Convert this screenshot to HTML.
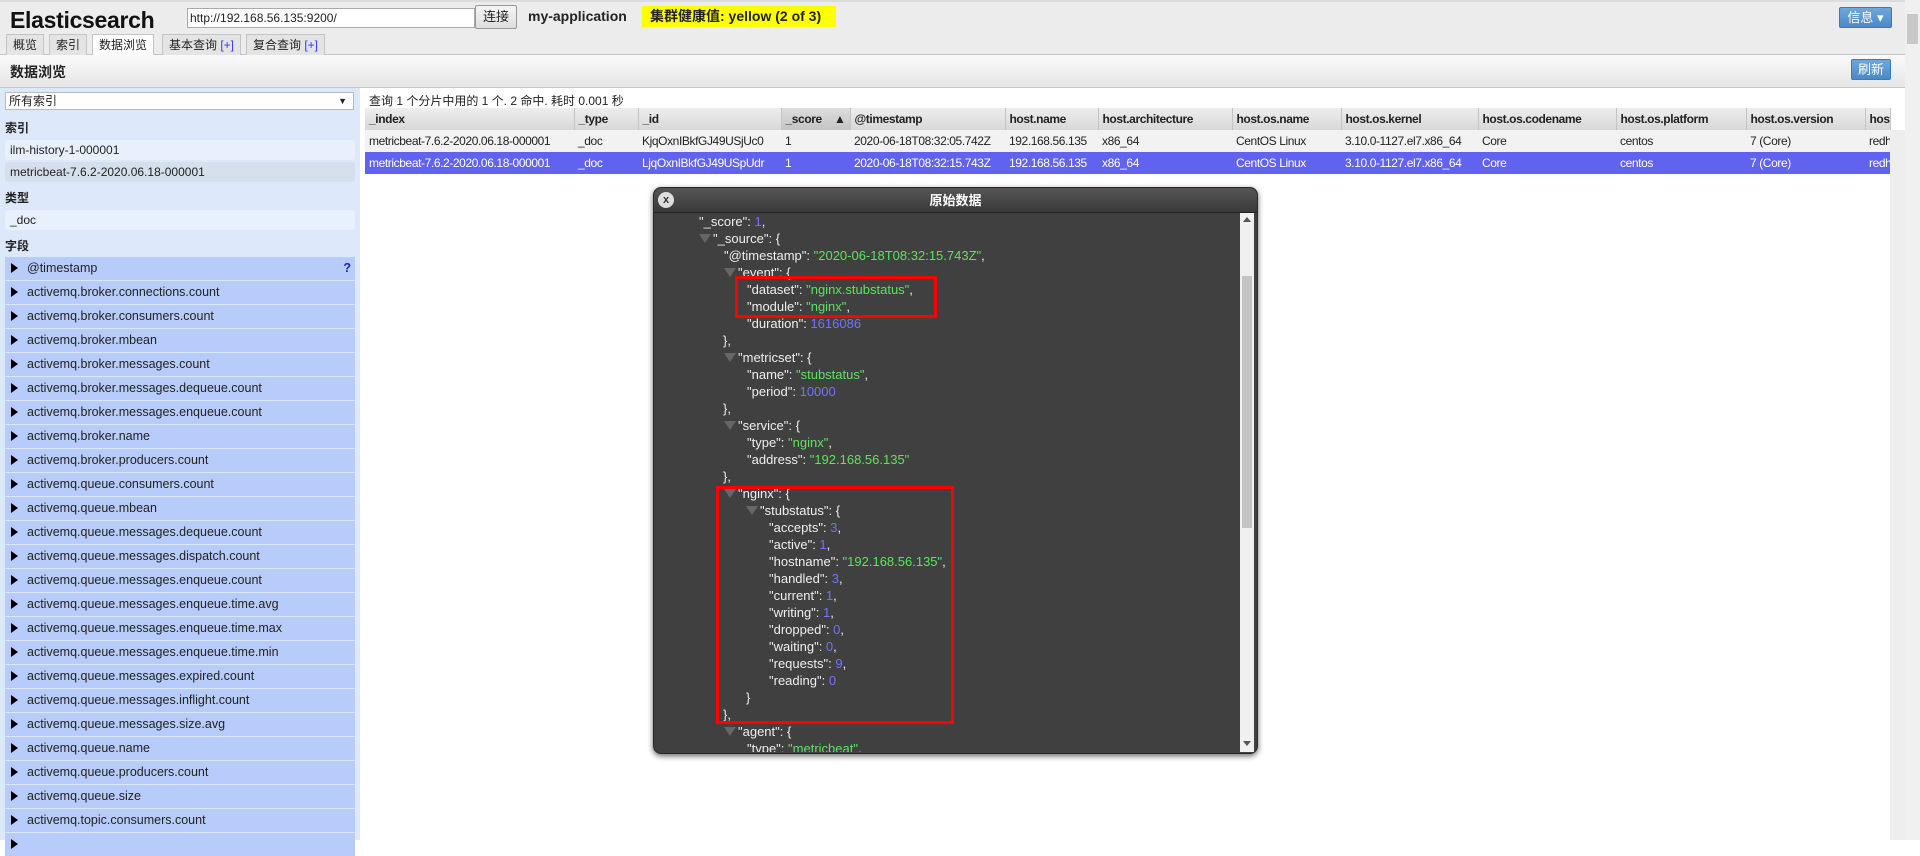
<!DOCTYPE html>
<html><head><meta charset="utf-8"><style>
*{box-sizing:border-box;margin:0;padding:0}
body{width:1920px;height:840px;overflow:hidden;background:#fff;font-family:"Liberation Sans","Noto Sans CJK SC",sans-serif;font-size:12px;color:#222;position:relative}
.abs{position:absolute}
#hdr{left:0;top:0;width:1905px;height:55px;background:#ececec;border-bottom:1px solid #c4c4c4;border-top:2px solid #dcdcdc}
.tab{position:absolute;top:34px;height:21px;border:1px solid #c4c4c4;border-bottom:none;background:#e4e4e4;font-size:12px;line-height:20px;padding:0 6px;color:#222}
.tab.act{background:#fff;height:22px}
.tab span{color:#33f}
#bar{left:0;top:55px;width:1905px;height:33px;background:linear-gradient(#fafafa,#e6e6e6);border-bottom:1px solid #c8c8c8}
.btn{position:absolute;background:linear-gradient(#6ea8dc,#4a88c8);border:1px solid #3d78b8;border-radius:2px;color:#fff;font-size:13px;text-align:center}
#left{left:0;top:88px;width:360px;height:752px;background:#dde8fb}
.lbl{position:absolute;left:5px;font-weight:bold;font-size:12px}
.it{position:absolute;left:5px;width:350px;height:20px;background:#e8f0fd;border-radius:3px;line-height:20px;padding-left:5px;font-size:12px}
.f{position:absolute;left:5px;width:350px;height:23px;background:#b8ccfb;line-height:23px;padding-left:22px;font-size:12.5px;color:#222}
.f:before{content:"";position:absolute;left:6px;top:6px;border-left:7px solid #000;border-top:5px solid transparent;border-bottom:5px solid transparent}
table{position:absolute;left:365px;top:108px;border-collapse:collapse;table-layout:fixed;width:1525px}
td,th{white-space:nowrap;overflow:hidden;padding-left:4px;text-align:left;font-size:12px;letter-spacing:-0.4px}
th{height:22px;background:linear-gradient(#eee,#d8d8d8);border-right:1px solid #c4c4c4;font-weight:bold}
tr.r1 td{height:22px;background:#f2f2f2}
tr.r2 td{height:22px;background:#6262f0;color:#fff}
#dlg{left:653px;top:187px;width:605px;height:567px;background:#404040;border-radius:8px;box-shadow:0 2px 6px rgba(0,0,0,.6);border:1px solid #2a2a2a}
#dt{left:0;top:0;width:603px;height:25px;border-radius:8px 8px 0 0;background:linear-gradient(#555,#3a3a3a);border-bottom:1px solid #222;color:#fff;font-weight:bold;text-align:center;line-height:25px;font-size:13px}
.j{position:absolute;color:#eee;font-size:13px;line-height:17px;white-space:nowrap}
.s{color:#5ee35e}.n{color:#7373ff}
.tri{position:absolute;border-top:9px solid #666;border-left:6px solid transparent;border-right:6px solid transparent}
.rb{position:absolute;border:3px solid #f00}
</style></head><body>
<div id="hdr" class="abs"></div>
<div class="abs" style="left:10px;top:7px;font-size:23px;font-weight:bold;color:#111;letter-spacing:-0.3px">Elasticsearch</div>
<div class="abs" style="left:187px;top:8px;width:288px;height:20px;background:#fff;border:1px solid #aaa;font-size:12px;line-height:18px;padding-left:2px">http://192.168.56.135:9200/</div>
<div class="abs" style="left:475px;top:5px;width:42px;height:24px;background:linear-gradient(#f6f6f6,#ddd);border:1px solid #999;border-radius:2px;text-align:center;line-height:22px;font-size:13px">连接</div>
<div class="abs" style="left:528px;top:8px;font-weight:bold;font-size:14px">my-application</div>
<div class="abs" style="left:642px;top:6px;width:194px;height:21px;background:#ff0;font-weight:bold;font-size:14px;line-height:21px;padding-left:8px">集群健康值: yellow (2 of 3)</div>
<div class="btn" style="left:1839px;top:7px;width:53px;height:21px;line-height:19px">信息 ▾</div>
<div class="tab" style="left:6px">概览</div>
<div class="tab" style="left:49px">索引</div>
<div class="tab act" style="left:92px">数据浏览</div>
<div class="tab" style="left:162px">基本查询 <span>[+]</span></div>
<div class="tab" style="left:246px">复合查询 <span>[+]</span></div>
<div id="bar" class="abs"></div>
<div class="abs" style="left:10px;top:62px;font-weight:bold;font-size:14px">数据浏览</div>
<div class="btn" style="left:1851px;top:59px;width:40px;height:21px;line-height:19px">刷新</div>
<div class="abs" style="left:1905px;top:0;width:15px;height:840px;background:#f0f0f0"></div>
<div class="abs" style="left:1907px;top:14px;width:11px;height:30px;background:#c8c8c8"></div>
<div class="abs" style="left:1890px;top:130px;width:15px;height:710px;background:#eee"></div>

<div id="left" class="abs"></div>
<div class="abs" style="left:5px;top:92px;width:349px;height:18px;background:#fff;border:1px solid #bbb;line-height:16px;padding-left:3px;font-size:12px">所有索引<span style="position:absolute;right:6px;font-size:9px">▼</span></div>
<div class="lbl" style="top:119px">索引</div>
<div class="it" style="top:140px">ilm-history-1-000001</div>
<div class="it" style="top:162px;background:#d6dfec">metricbeat-7.6.2-2020.06.18-000001</div>
<div class="lbl" style="top:189px">类型</div>
<div class="it" style="top:210px">_doc</div>
<div class="lbl" style="top:237px">字段</div>
<div class="f" style="top:257px">@timestamp<span style="position:absolute;right:4px;color:#22c;font-weight:bold">?</span></div>
<div class="f" style="top:281px">activemq.broker.connections.count</div>
<div class="f" style="top:305px">activemq.broker.consumers.count</div>
<div class="f" style="top:329px">activemq.broker.mbean</div>
<div class="f" style="top:353px">activemq.broker.messages.count</div>
<div class="f" style="top:377px">activemq.broker.messages.dequeue.count</div>
<div class="f" style="top:401px">activemq.broker.messages.enqueue.count</div>
<div class="f" style="top:425px">activemq.broker.name</div>
<div class="f" style="top:449px">activemq.broker.producers.count</div>
<div class="f" style="top:473px">activemq.queue.consumers.count</div>
<div class="f" style="top:497px">activemq.queue.mbean</div>
<div class="f" style="top:521px">activemq.queue.messages.dequeue.count</div>
<div class="f" style="top:545px">activemq.queue.messages.dispatch.count</div>
<div class="f" style="top:569px">activemq.queue.messages.enqueue.count</div>
<div class="f" style="top:593px">activemq.queue.messages.enqueue.time.avg</div>
<div class="f" style="top:617px">activemq.queue.messages.enqueue.time.max</div>
<div class="f" style="top:641px">activemq.queue.messages.enqueue.time.min</div>
<div class="f" style="top:665px">activemq.queue.messages.expired.count</div>
<div class="f" style="top:689px">activemq.queue.messages.inflight.count</div>
<div class="f" style="top:713px">activemq.queue.messages.size.avg</div>
<div class="f" style="top:737px">activemq.queue.name</div>
<div class="f" style="top:761px">activemq.queue.producers.count</div>
<div class="f" style="top:785px">activemq.queue.size</div>
<div class="f" style="top:809px">activemq.topic.consumers.count</div>
<div class="f" style="top:833px"></div>

<div class="abs" style="left:369px;top:92px;font-size:12px">查询 1 个分片中用的 1 个. 2 命中. 耗时 0.001 秒</div>
<table>
<colgroup><col style="width:209px"><col style="width:64px"><col style="width:143px"><col style="width:69px"><col style="width:155px"><col style="width:93px"><col style="width:134px"><col style="width:109px"><col style="width:137px"><col style="width:138px"><col style="width:130px"><col style="width:119px"><col style="width:25px"></colgroup>
<tr><th>_index</th><th>_type</th><th>_id</th><th style="background:linear-gradient(#ddd,#c4c4c4)">_score <span style="float:right;margin-right:4px">▲</span></th><th>@timestamp</th><th>host.name</th><th>host.architecture</th><th>host.os.name</th><th>host.os.kernel</th><th>host.os.codename</th><th>host.os.platform</th><th>host.os.version</th><th>host.os.family</th></tr>
<tr class="r1"><td>metricbeat-7.6.2-2020.06.18-000001</td><td>_doc</td><td>KjqOxnIBkfGJ49USjUc0</td><td>1</td><td>2020-06-18T08:32:05.742Z</td><td>192.168.56.135</td><td>x86_64</td><td>CentOS Linux</td><td>3.10.0-1127.el7.x86_64</td><td>Core</td><td>centos</td><td>7 (Core)</td><td>redhat</td></tr>
<tr class="r2"><td>metricbeat-7.6.2-2020.06.18-000001</td><td>_doc</td><td>LjqOxnIBkfGJ49USpUdr</td><td>1</td><td>2020-06-18T08:32:15.743Z</td><td>192.168.56.135</td><td>x86_64</td><td>CentOS Linux</td><td>3.10.0-1127.el7.x86_64</td><td>Core</td><td>centos</td><td>7 (Core)</td><td>redhat</td></tr>
</table>

<div id="dlg" class="abs">
<div id="dt" class="abs">原始数据</div>
<div class="abs" style="left:4px;top:4px;width:16px;height:16px;border-radius:50%;background:#ddd;color:#333;font-size:11px;font-weight:bold;text-align:center;line-height:16px">x</div>
<div class="abs" style="left:586px;top:25px;width:14px;height:539px;background:#f0f0f0"></div>
<div class="abs" style="left:588px;top:88px;width:10px;height:252px;background:#c4c4c4"></div>
<div class="abs" style="left:589px;top:29px;border-bottom:5px solid #555;border-left:4px solid transparent;border-right:4px solid transparent"></div>
<div class="abs" style="left:589px;top:553px;border-top:5px solid #555;border-left:4px solid transparent;border-right:4px solid transparent"></div>
</div>
<div class="j" style="left:699px;top:213px">"_score": <span class="n">1</span>,</div>
<div class="tri" style="left:699px;top:234px"></div><div class="j" style="left:713px;top:230px">"_source": {</div>
<div class="j" style="left:724px;top:247px">"@timestamp": <span class="s">"2020-06-18T08:32:15.743Z"</span>,</div>
<div class="tri" style="left:724px;top:268px"></div><div class="j" style="left:738px;top:264px">"event": {</div>
<div class="j" style="left:747px;top:281px">"dataset": <span class="s">"nginx.stubstatus"</span>,</div>
<div class="j" style="left:747px;top:298px">"module": <span class="s">"nginx"</span>,</div>
<div class="j" style="left:747px;top:315px">"duration": <span class="n">1616086</span></div>
<div class="j" style="left:723px;top:332px">},</div>
<div class="tri" style="left:724px;top:353px"></div><div class="j" style="left:738px;top:349px">"metricset": {</div>
<div class="j" style="left:747px;top:366px">"name": <span class="s">"stubstatus"</span>,</div>
<div class="j" style="left:747px;top:383px">"period": <span class="n">10000</span></div>
<div class="j" style="left:723px;top:400px">},</div>
<div class="tri" style="left:724px;top:421px"></div><div class="j" style="left:738px;top:417px">"service": {</div>
<div class="j" style="left:747px;top:434px">"type": <span class="s">"nginx"</span>,</div>
<div class="j" style="left:747px;top:451px">"address": <span class="s">"192.168.56.135"</span></div>
<div class="j" style="left:723px;top:468px">},</div>
<div class="tri" style="left:724px;top:489px"></div><div class="j" style="left:738px;top:485px">"nginx": {</div>
<div class="tri" style="left:746px;top:506px"></div><div class="j" style="left:760px;top:502px">"stubstatus": {</div>
<div class="j" style="left:769px;top:519px">"accepts": <span class="n">3</span>,</div>
<div class="j" style="left:769px;top:536px">"active": <span class="n">1</span>,</div>
<div class="j" style="left:769px;top:553px">"hostname": <span class="s">"192.168.56.135"</span>,</div>
<div class="j" style="left:769px;top:570px">"handled": <span class="n">3</span>,</div>
<div class="j" style="left:769px;top:587px">"current": <span class="n">1</span>,</div>
<div class="j" style="left:769px;top:604px">"writing": <span class="n">1</span>,</div>
<div class="j" style="left:769px;top:621px">"dropped": <span class="n">0</span>,</div>
<div class="j" style="left:769px;top:638px">"waiting": <span class="n">0</span>,</div>
<div class="j" style="left:769px;top:655px">"requests": <span class="n">9</span>,</div>
<div class="j" style="left:769px;top:672px">"reading": <span class="n">0</span></div>
<div class="j" style="left:746px;top:689px">}</div>
<div class="j" style="left:723px;top:706px">},</div>
<div class="tri" style="left:724px;top:727px"></div><div class="j" style="left:738px;top:723px">"agent": {</div>
<div class="abs" style="left:654px;top:740px;width:585px;height:12px;overflow:hidden"><div class="j" style="left:93px;top:0">"type": <span class="s">"metricbeat"</span>,</div></div>
<div class="rb" style="left:735px;top:276px;width:202px;height:42px"></div>
<div class="rb" style="left:716px;top:486px;width:238px;height:238px"></div>
</body></html>
